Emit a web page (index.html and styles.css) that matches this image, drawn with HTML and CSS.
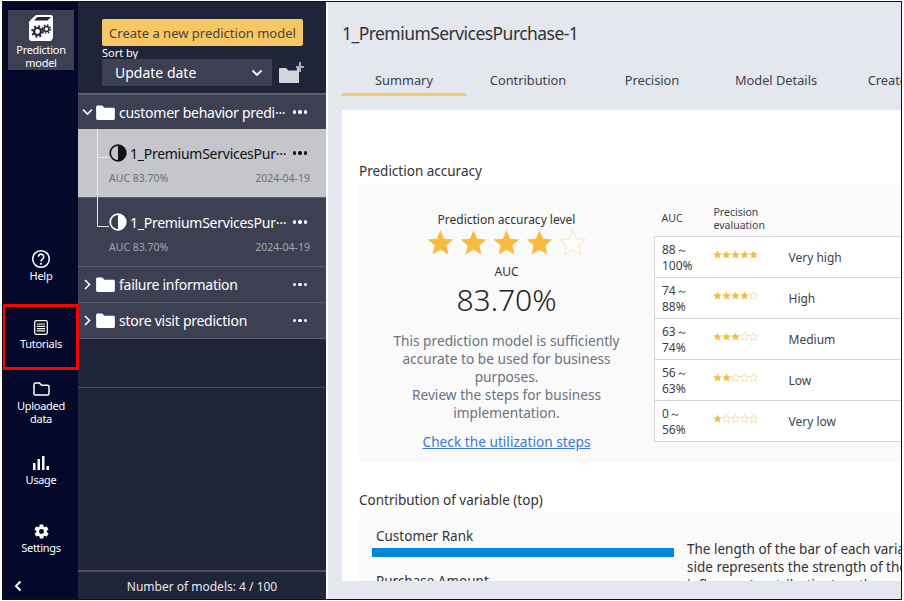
FILE: index.html
```html
<!DOCTYPE html>
<html lang="en">
  <head>
    <meta charset="UTF-8">
    <meta name="viewport" content="width=device-width, initial-scale=1.0">
    <title>Prediction model</title>
    <link rel="stylesheet" href="styles.css">
  </head>
  <body>
    <svg class="defs" width="0" height="0">
      <symbol id="star" viewBox="0 0 24 24"><path d="M12 1l3.2 7.6 8.2.7-6.2 5.4 1.9 8L12 18.500l-7.100 4.200 1.900-8L.6 9.300l8.200-.7z"/></symbol>
      <symbol id="folder" viewBox="0 0 20 16"><path d="M0 2a1.500 1.500 0 0 1 1.500-1.500h5L9 3h9.500A1.500 1.500 0 0 1 20 4.500v10a1.500 1.500 0 0 1-1.500 1.500h-17A1.500 1.500 0 0 1 0 14.500z"/></symbol>
      <symbol id="half" viewBox="0 0 18 18"><circle cx="9" cy="9" r="7.800" fill="none" stroke="currentColor" stroke-width="1.700"/><path d="M9 1.200a7.800 7.800 0 0 1 0 15.600z" fill="currentColor"/></symbol>
    </svg>

    <div class="frame">
      <nav class="sidebar">
        <a class="nav-item active">
          <svg class="nav-icon" width="26" height="28" viewBox="0 0 26 28">
            <path d="M3 5.500 8 1h15a2 2 0 0 1 2 2v21l-1 1.500a2 2 0 0 1-2 1.500H4a3 3 0 0 1-3-3V8z" fill="#fff"/>
            <path d="M6 6.500 9.500 3H23l-3.500 3.500z" fill="#23263a"/>
            <circle cx="9.500" cy="17.500" r="3.500" fill="none" stroke="#23263a" stroke-width="2.200"/>
            <circle cx="9.500" cy="17.500" r="5.300" fill="none" stroke="#23263a" stroke-width="2" stroke-dasharray="2 2.160"/>
            <circle cx="18.500" cy="15" r="2.500" fill="none" stroke="#23263a" stroke-width="1.500"/>
            <circle cx="18.500" cy="15" r="4" fill="none" stroke="#23263a" stroke-width="1.500" stroke-dasharray="1.500 1.640"/>
          </svg>
          <span>Prediction<br>model</span>
        </a>
        <div class="nav-bottom">
          <a class="nav-item help">
            <svg class="nav-icon" width="20" height="20" viewBox="0 0 20 20">
              <circle cx="10" cy="10" r="8.300" fill="none" stroke="#fff" stroke-width="1.500"/>
              <path d="M7.300 7.800a2.700 2.700 0 1 1 4.200 2.300c-1 .7-1.500 1.100-1.500 2.300" fill="none" stroke="#fff" stroke-width="1.500"/>
              <circle cx="10" cy="14.700" r="1" fill="#fff"/>
            </svg>
            <span>Help</span>
          </a>
          <a class="nav-item tutorials">
            <svg class="nav-icon" width="14" height="15" viewBox="0 0 14 15">
              <rect x=".7" y=".7" width="12.600" height="13.600" rx="1.500" fill="none" stroke="#fff" stroke-width="1.300"/>
              <path d="M3 4h8M3 6.300h8M3 8.600h8M3 10.900h8" stroke="#fff" stroke-width="1.200"/>
            </svg>
            <span>Tutorials</span>
          </a>
          <a class="nav-item uploaded">
            <svg class="nav-icon" width="17" height="14" viewBox="0 0 17 14">
              <path d="M1 2.500A1.500 1.500 0 0 1 2.500 1h4l2 2.200h6A1.500 1.500 0 0 1 16 4.700v6.800a1.500 1.500 0 0 1-1.500 1.500h-12A1.500 1.500 0 0 1 1 11.500z" fill="none" stroke="#fff" stroke-width="1.500"/>
            </svg>
            <span>Uploaded<br>data</span>
          </a>
          <a class="nav-item usage">
            <svg class="nav-icon" width="16" height="14" viewBox="0 0 16 14">
              <path d="M0 7h2.500v7H0zM4.500 3H7v11H4.500zM9 0h2.500v14H9zM13.500 10H16v4h-2.500z" fill="#fff"/>
            </svg>
            <span>Usage</span>
          </a>
          <a class="nav-item settings">
            <svg class="nav-icon" width="17" height="17" viewBox="0 0 24 24">
              <path fill="#fff" d="M19.400 13a7.500 7.500 0 0 0 0-2l2.100-1.600a.5.500 0 0 0 .1-.6l-2-3.500a.5.500 0 0 0-.6-.2l-2.500 1a7.300 7.300 0 0 0-1.700-1l-.4-2.600a.5.500 0 0 0-.5-.5h-4a.5.500 0 0 0-.5.400l-.4 2.700a7.300 7.300 0 0 0-1.700 1l-2.500-1a.5.500 0 0 0-.6.200l-2 3.500a.5.500 0 0 0 .1.600L4.600 11a7.500 7.500 0 0 0 0 2l-2.100 1.600a.5.500 0 0 0-.1.600l2 3.500c.1.200.4.300.6.200l2.500-1c.5.400 1.100.7 1.700 1l.4 2.600c0 .3.200.5.500.5h4c.3 0 .5-.2.500-.4l.4-2.700c.6-.3 1.200-.6 1.700-1l2.500 1c.2.100.5 0 .6-.2l2-3.500a.5.500 0 0 0-.1-.6zM12 15.500a3.500 3.500 0 1 1 0-7 3.500 3.500 0 0 1 0 7z"/>
            </svg>
            <span>Settings</span>
          </a>
          <a class="collapse">
            <svg width="8" height="12" viewBox="0 0 8 12"><path d="M6.500 1.500 2 6l4.500 4.500" fill="none" stroke="#fff" stroke-width="2"/></svg>
          </a>
        </div>
      </nav>

      <aside class="panel">
        <div class="panel-top">
          <button class="create-button">Create a new prediction model</button>
          <div class="sort-label">Sort by</div>
          <div class="sort-row">
            <div class="sort-select">
              <span>Update date</span>
              <svg width="12" height="8" viewBox="0 0 12 8"><path d="M1.500 1.500 6 6l4.500-4.500" fill="none" stroke="#fff" stroke-width="1.800"/></svg>
            </div>
            <svg class="new-folder" width="25" height="21" viewBox="0 0 25 21">
              <path d="M0 7a1 1 0 0 1 1-1h6l2.500 2.500H18V5h2v16H1a1 1 0 0 1-1-1z" fill="#d3d5da"/>
              <path d="M20 0h2v4h3v2h-3v4h-2V6h-3V4h3z" fill="#a9acb5"/>
            </svg>
          </div>
        </div>

        <div class="tree">
          <div class="folder-row first">
            <svg class="arrow" width="11" height="8" viewBox="0 0 11 8"><path d="M1 1.500 5.500 6 10 1.500" fill="none" stroke="#fff" stroke-width="1.600"/></svg>
            <svg class="folder-icon"><use href="#folder"/></svg>
            <span class="folder-name">customer behavior predi···</span>
            <span class="more"><i></i><i></i><i></i></span>
          </div>

          <div class="model-row selected">
            <div class="model-head">
              <svg class="half-icon"><use href="#half"/></svg>
              <span class="model-name">1_PremiumServicesPur···</span>
              <span class="more"><i></i><i></i><i></i></span>
            </div>
            <div class="model-meta"><span>AUC 83.70%</span><span>2024-04-19</span></div>
          </div>

          <div class="model-row last">
            <div class="model-head">
              <svg class="half-icon"><use href="#half"/></svg>
              <span class="model-name">1_PremiumServicesPur···</span>
              <span class="more"><i></i><i></i><i></i></span>
            </div>
            <div class="model-meta"><span>AUC 83.70%</span><span>2024-04-19</span></div>
          </div>

          <div class="folder-row">
            <svg class="arrow" width="8" height="11" viewBox="0 0 8 11"><path d="M1.500 1 6 5.500 1.500 10" fill="none" stroke="#fff" stroke-width="1.600"/></svg>
            <svg class="folder-icon"><use href="#folder"/></svg>
            <span class="folder-name">failure information</span>
            <span class="more"><i></i><i></i><i></i></span>
          </div>

          <div class="folder-row">
            <svg class="arrow" width="8" height="11" viewBox="0 0 8 11"><path d="M1.500 1 6 5.500 1.500 10" fill="none" stroke="#fff" stroke-width="1.600"/></svg>
            <svg class="folder-icon"><use href="#folder"/></svg>
            <span class="folder-name">store visit prediction</span>
            <span class="more"><i></i><i></i><i></i></span>
          </div>
        </div>

        <div class="tree-end"></div>
        <div class="panel-footer">Number of models: 4 / 100</div>
      </aside>

      <main class="main">
        <h1 class="model-title">1_PremiumServicesPurchase-1</h1>
        <div class="tabs">
          <a class="tab current">Summary</a>
          <a class="tab">Contribution</a>
          <a class="tab">Precision</a>
          <a class="tab">Model Details</a>
          <a class="tab">Created by</a>
        </div>

        <div class="card">
          <h2 class="section-title">Prediction accuracy</h2>
          <section class="accuracy">
            <div class="accuracy-left">
              <div class="level-label">Prediction accuracy level</div>
              <div class="big-stars">
                <svg><use href="#star"/></svg>
                <svg><use href="#star"/></svg>
                <svg><use href="#star"/></svg>
                <svg><use href="#star"/></svg>
                <svg class="empty"><use href="#star"/></svg>
              </div>
              <div class="auc-label">AUC</div>
              <div class="auc-value">83.70%</div>
              <p class="accuracy-text">This prediction model is sufficiently<br>accurate to be used for business<br>purposes.<br>Review the steps for business<br>implementation.</p>
              <a class="steps-link">Check the utilization steps</a>
            </div>

            <table class="level-table">
              <thead>
                <tr><th class="col-auc">AUC</th><th class="col-stars">Precision<br>evaluation</th><th></th></tr>
              </thead>
              <tbody>
                <tr>
                  <td>88～<br>100%</td>
                  <td><span class="small-stars"><svg><use href="#star"/></svg><svg><use href="#star"/></svg><svg><use href="#star"/></svg><svg><use href="#star"/></svg><svg><use href="#star"/></svg></span></td>
                  <td class="level-name">Very high</td>
                </tr>
                <tr>
                  <td>74～<br>88%</td>
                  <td><span class="small-stars"><svg><use href="#star"/></svg><svg><use href="#star"/></svg><svg><use href="#star"/></svg><svg><use href="#star"/></svg><svg class="empty"><use href="#star"/></svg></span></td>
                  <td class="level-name">High</td>
                </tr>
                <tr>
                  <td>63～<br>74%</td>
                  <td><span class="small-stars"><svg><use href="#star"/></svg><svg><use href="#star"/></svg><svg><use href="#star"/></svg><svg class="empty"><use href="#star"/></svg><svg class="empty"><use href="#star"/></svg></span></td>
                  <td class="level-name">Medium</td>
                </tr>
                <tr>
                  <td>56～<br>63%</td>
                  <td><span class="small-stars"><svg><use href="#star"/></svg><svg><use href="#star"/></svg><svg class="empty"><use href="#star"/></svg><svg class="empty"><use href="#star"/></svg><svg class="empty"><use href="#star"/></svg></span></td>
                  <td class="level-name">Low</td>
                </tr>
                <tr>
                  <td>0～<br>56%</td>
                  <td><span class="small-stars"><svg><use href="#star"/></svg><svg class="empty"><use href="#star"/></svg><svg class="empty"><use href="#star"/></svg><svg class="empty"><use href="#star"/></svg><svg class="empty"><use href="#star"/></svg></span></td>
                  <td class="level-name">Very low</td>
                </tr>
              </tbody>
            </table>
          </section>

          <h2 class="section-title second">Contribution of variable (top)</h2>
          <section class="contribution">
            <div class="bars">
              <div class="bar-name">Customer Rank</div>
              <div class="bar" style="width: 302px"></div>
              <div class="bar-name next">Purchase Amount</div>
            </div>
            <p class="contribution-text">The length of the bar of each variable on the right<br>side represents the strength of the variable's<br>influence (contribution) on the prediction</p>
          </section>
        </div>
      </main>

      <div class="highlight"></div>
    </div>
  </body>
</html>
```

FILE: styles.css
```css
* {
    box-sizing: border-box;
}

body {
    width: 904px;
    height: 601px;
    margin: 0;
    padding: 1px 2px 1px 2px;
    background: #fff;
    font-family: "Noto Sans", sans-serif;
    overflow: hidden;
}

.defs {
    position: absolute;
}

.frame {
    position: relative;
    display: flex;
    height: 599px;
    border: 1px solid #111;
    overflow: hidden;
    background: #e4e8ee;
}

/* left nav */
.sidebar {
    width: 75px;
    flex: none;
    display: flex;
    flex-direction: column;
    background: #04082a;
    color: #fff;
    font-size: 11px;
    line-height: 13px;
    letter-spacing: -0.3px;
    text-align: center;
}

.nav-item {
    display: flex;
    flex-direction: column;
    align-items: center;
}

.nav-item.active {
    width: 66px;
    height: 60px;
    margin: 8px 0 0 5px;
    padding-top: 4px;
    background: #3d4052;
}

.active .nav-icon {
    margin-bottom: 1px;
}

.nav-icon {
    display: block;
}

.nav-bottom {
    margin-top: auto;
    padding-left: 1px;
    display: flex;
    flex-direction: column;
}

.help {
    height: 71px;
}

.tutorials {
    height: 62px;
}

.tutorials .nav-icon {
    margin-bottom: 2px;
}

.uploaded .nav-icon,
.usage .nav-icon {
    margin-bottom: 3px;
}

.settings .nav-icon {
    margin-bottom: 1px;
}

.uploaded {
    height: 74px;
}

.usage {
    height: 67px;
}

.settings {
    height: 50px;
}

.collapse {
    display: block;
    height: 26px;
    padding: 7px 0 0 10px;
    text-align: left;
}

.highlight {
    position: absolute;
    left: -1px;
    top: 302px;
    width: 77px;
    height: 66px;
    border: 3px solid #f00;
}

/* model list */
.panel {
    width: 248px;
    flex: none;
    display: flex;
    flex-direction: column;
    background: #1f2439;
    color: #fff;
}

.panel-top {
    height: 91px;
    padding: 17px 0 0 24px;
}

.create-button {
    display: block;
    width: 201px;
    height: 27px;
    padding: 0;
    border: none;
    border-radius: 2px;
    background: #f7c766;
    color: #4a4436;
    font-family: inherit;
    font-size: 13px;
}

.sort-label {
    height: 13px;
    font-size: 11px;
    line-height: 13px;
}

.sort-row {
    display: flex;
    align-items: center;
    gap: 7px;
}

.sort-select {
    width: 170px;
    height: 27px;
    padding: 0 9px 0 13px;
    display: flex;
    align-items: center;
    justify-content: space-between;
    background: #3d4052;
    font-size: 14px;
}

.folder-row {
    height: 36px;
    padding: 0 19px 0 4px;
    display: flex;
    align-items: center;
    background: #3d4052;
    border-bottom: 1px solid #5c5f6e;
    font-size: 14px;
    letter-spacing: -0.26px;
}

.folder-row.first {
    border-top: 2px solid #5c5f6e;
    border-bottom: 0;
}

.arrow {
    width: 11px;
    flex: none;
}

.folder-icon {
    width: 19px;
    height: 15px;
    margin: 0 4px 0 3px;
    fill: #fff;
    flex: none;
}

.folder-name,
.model-name {
    flex: 1;
    white-space: nowrap;
}

.more {
    display: flex;
    gap: 2px;
    flex: none;
}

.more i {
    width: 3.500px;
    height: 3.500px;
    border-radius: 50%;
    background: currentColor;
}

.model-row {
    position: relative;
    height: 69px;
    padding: 14px 19px 0 31px;
    background: #3d4052;
    border-bottom: 1px solid #5c5f6e;
}

.model-row.selected {
    background: #c4c6cb;
    color: #111;
}

/* tree connector */
.model-row::before {
    content: "";
    position: absolute;
    left: 19px;
    top: 0;
    width: 11px;
    height: 28px;
    border-left: 1px solid #e8e8ea;
    border-bottom: 1px solid #e8e8ea;
}

.model-row.selected::after {
    content: "";
    position: absolute;
    left: 19px;
    top: 28px;
    bottom: -1px;
    border-left: 1px solid #e8e8ea;
}

.model-head {
    display: flex;
    align-items: center;
    font-size: 14px;
    letter-spacing: -0.26px;
    height: 20px;
}

.half-icon {
    width: 18px;
    height: 18px;
    margin-right: 3px;
    flex: none;
}

.model-meta {
    display: flex;
    justify-content: space-between;
    margin-top: 8px;
    margin-right: -3px;
    font-size: 10.500px;
    color: #a3a6b0;
}

.selected .model-meta {
    color: #6e7077;
}

.tree-end {
    height: 49px;
    border-bottom: 1px solid #4b4f60;
    margin-bottom: auto;
}

.panel-footer {
    height: 29px;
    border-top: 2px solid #4b4f60;
    text-align: center;
    font-size: 12px;
    line-height: 30px;
    color: #e8e9ec;
}

/* main area */
.main {
    flex: 1;
    min-width: 0;
    margin-left: 2px;
    display: flex;
    flex-direction: column;
    padding-left: 14px;
    background: #e4e8ee;
    box-shadow: -2px 0 0 #fff;
}

.model-title {
    margin: 18px 0 0;
    font-size: 17.500px;
    letter-spacing: -0.55px;
    line-height: 26px;
    font-weight: 400;
    color: #333;
}

.tabs {
    display: flex;
    margin-top: 21px;
    height: 29px;
}

.tab {
    width: 124px;
    flex: none;
    text-align: center;
    font-size: 12.800px;
    line-height: 26px;
    color: #3b3f4c;
    white-space: nowrap;
}

.tab.current {
    border-bottom: 3px solid #f5c76b;
}

.card {
    height: 471px;
    margin-top: 14px;
    padding: 51px 0 0 17px;
    background: #fff;
    overflow: hidden;
}

.section-title {
    margin: 0;
    height: 23px;
    font-size: 13.500px;
    line-height: 20px;
    font-weight: 400;
    color: #333;
}

.section-title.second {
    margin-top: 28px;
}

.accuracy {
    width: 600px;
    height: 278px;
    display: flex;
    background: #fafafa;
}

.accuracy-left {
    width: 295px;
    flex: none;
    padding-top: 28px;
    display: flex;
    flex-direction: column;
    align-items: center;
    color: #333;
}

.level-label {
    font-size: 12px;
    line-height: 16px;
}

.big-stars {
    display: flex;
    gap: 6px;
    height: 27px;
    margin-top: 1px;
}

.big-stars svg {
    width: 27px;
    height: 27px;
    fill: #f8bb3f;
}

.big-stars svg.empty {
    fill: #fff;
    stroke: #f9e6c4;
    stroke-width: 1;
}

.auc-label {
    margin-top: 8px;
    font-size: 12px;
    line-height: 16px;
}

.auc-value {
    font-size: 30px;
    font-weight: 300;
    line-height: 40px;
    color: #222;
}

.accuracy-text {
    margin: 12px 0 0;
    text-align: center;
    font-size: 13.700px;
    line-height: 18px;
    color: #6d7180;
}

.steps-link {
    margin-top: 11px;
    font-size: 13.700px;
    line-height: 18px;
    color: #3a78d8;
    text-decoration: underline;
}

.level-table {
    width: 300px;
    flex: none;
    align-self: flex-start;
    margin-top: 20px;
    border-collapse: collapse;
    color: #3b3f4c;
    table-layout: fixed;
}

.level-table th {
    height: 32px;
    padding: 0 0 2px 7px;
    font-size: 10.500px;
    line-height: 13px;
    font-weight: 400;
    text-align: left;
}

.col-auc {
    width: 58px;
}

.col-stars {
    width: 76px;
    padding-left: 1px !important;
}

.level-table tbody tr {
    height: 41px;
    border: 1px solid #d4d6dc;
    background: #fff;
}

.level-table td {
    padding: 2px 0 0 7px;
    font-size: 12px;
    line-height: 16px;
}

.level-table td:nth-child(2) {
    padding-left: 0;
}

.level-table td.level-name {
    padding-left: 0;
    font-size: 12px;
}

.small-stars {
    display: flex;
    margin-bottom: 6px;
}

.small-stars svg {
    width: 9px;
    height: 9px;
    fill: #f8bb3f;
}

.small-stars svg.empty {
    fill: #fff;
    stroke: #f3d79a;
    stroke-width: 2;
}

.contribution {
    width: 600px;
    height: 120px;
    display: flex;
    background: #fafafa;
}

.bars {
    width: 328px;
    flex: none;
    padding: 14px 0 0 13px;
}

.bar-name {
    padding-left: 4px;
    font-size: 13.500px;
    line-height: 18px;
    color: #333;
}

.bar-name.next {
    margin-top: 15px;
}

.bar {
    height: 9px;
    margin-top: 3px;
    background: #0088d6;
}

.contribution-text {
    margin: 27px 0 0;
    font-size: 13.500px;
    line-height: 18px;
    white-space: nowrap;
    color: #333;
}
```
